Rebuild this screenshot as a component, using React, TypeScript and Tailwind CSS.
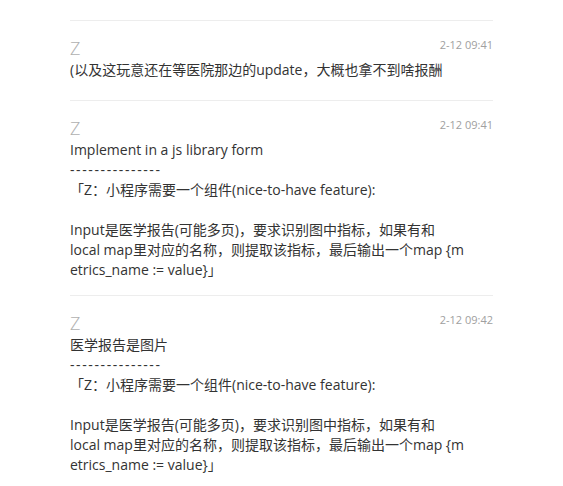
import React from 'react';

const quote = `「Z：小程序需要一个组件(nice-to-have feature):

Input是医学报告(可能多页)，要求识别图中指标，如果有和
local map里对应的名称，则提取该指标，最后输出一个map {metrics_name := value}」`;

const Dashes = () => (
  <span className="tracking-[1.6px]">---------------</span>
);

const messages = [
  { name: 'Z', time: '2-12 09:41', first: '(以及这玩意还在等医院那边的update，大概也拿不到啥报酬', quote: false, pb: 'pb-[20px]' },
  { name: 'Z', time: '2-12 09:41', first: 'Implement in a js library form', quote: true, pb: 'pb-[15px]' },
  { name: 'Z', time: '2-12 09:42', first: '医学报告是图片', quote: true, pb: 'pb-[15px]' },
];

const App = () => {
  return (
    <div
      className="w-[563px] h-[486px] overflow-hidden bg-white pt-[20px] pl-[70px]"
      style={{ fontFamily: '"Open Sans", "Noto Sans CJK SC", sans-serif' }}
    >
      <div className="w-[423px]">
        {messages.map((m, i) => (
          <div key={i} className={`border-t border-[#ededed] pt-[17px] ${m.pb}`}>
            {/* header */}
            <div className="flex justify-between items-start h-[22px]">
              <span className="text-[18px] leading-[20px] font-light text-[#b0b0b0]">{m.name}</span>
              <span className="text-[11px] leading-[13px] text-[#a0a0a0]">{m.time}</span>
            </div>
            <div className="w-[400px] text-[14px] leading-[20px] text-[#333] whitespace-pre-wrap break-all">
              <div>{m.first}</div>
              {m.quote && (
                <>
                  <Dashes />
                  <div>{quote}</div>
                </>
              )}
            </div>
          </div>
        ))}
      </div>
    </div>
  );
};

export default App;
